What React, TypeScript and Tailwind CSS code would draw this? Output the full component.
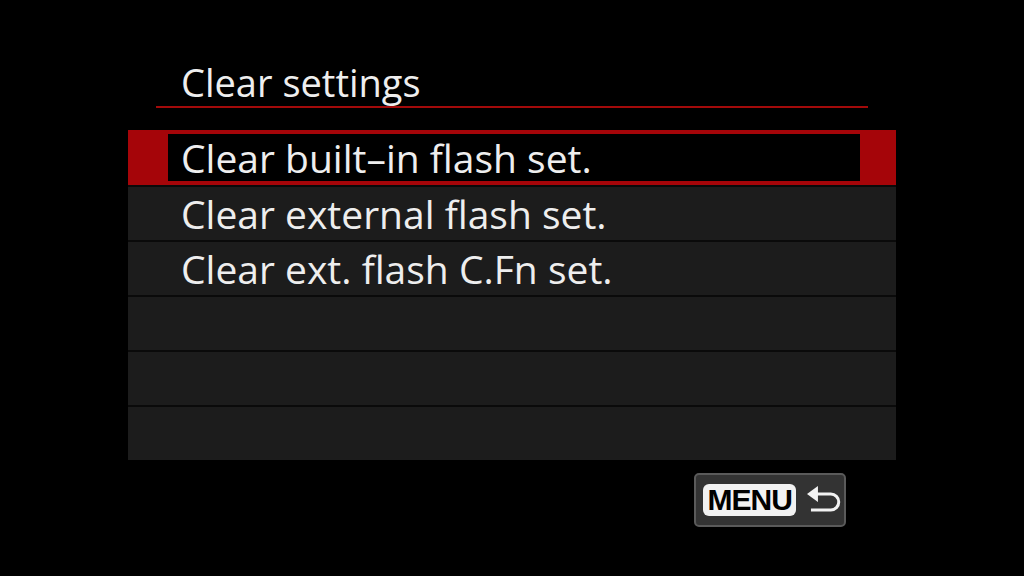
const FONT = { fontFamily: '"Open Sans", "Noto Sans", sans-serif' };

function ReturnIcon() {
  return (
    <svg width="38" height="30" viewBox="0 0 38 30" fill="none">
      {/* filled arrow head + U-turn stroke */}
      <path d="M1 9 L12 1 L12 17 Z" fill="#f2f2f2" />
      <path
        d="M10 9 H25 A8 8 0 0 1 25 25 H5"
        stroke="#f2f2f2"
        strokeWidth="3"
        fill="none"
      />
    </svg>
  );
}

const rows = [
  "Clear built\u2013in flash set.",
  "Clear external flash set.",
  "Clear ext. flash C.Fn set.",
  "",
  "",
  "",
];

export default function App() {
  return (
    <div
      className="flex h-[576px] w-[1024px] flex-col overflow-hidden bg-black text-[#eeeeee]"
      style={FONT}
    >
      {/* タイトル */}
      <div className="ml-[156px] mt-[58px] flex h-[50px] w-[712px] items-center border-b-2 border-[#a30a0a] pl-[25px] text-[38px] leading-none">
        Clear settings
      </div>

      {/* メニュー項目 */}
      <div className="ml-[128px] mt-[22px] flex w-[768px] flex-col gap-[2px] bg-[#0a0a0a]">
        {rows.map((label, i) =>
          i === 0 ? (
            <div key={i} className="flex h-[55px] bg-[#a50509] py-[4px] pl-[40px] pr-[36px]">
              <div className="flex flex-1 items-center bg-black pl-[13px] text-[39px] leading-none">
                {label}
              </div>
            </div>
          ) : (
            <div
              key={i}
              className="flex h-[53px] items-center bg-[#1c1c1c] pl-[53px] text-[39px] leading-none"
            >
              {label}
            </div>
          )
        )}
      </div>

      {/* MENU ボタン */}
      <div className="ml-[694px] mt-[13px] flex h-[54px] w-[152px] items-center gap-[10px] rounded-[5px] border-2 border-[#5a5a5a] bg-[#333333] pl-[7px]">
        <div
          className="flex h-[32px] w-[94px] items-center justify-center rounded-[6px] bg-[#f2f2f2] text-[30px] font-bold leading-none tracking-[-1px] text-black"
          style={{ fontFamily: '"Liberation Sans", "Noto Sans", sans-serif' }}
        >
          MENU
        </div>
        <ReturnIcon />
      </div>
    </div>
  );
}
